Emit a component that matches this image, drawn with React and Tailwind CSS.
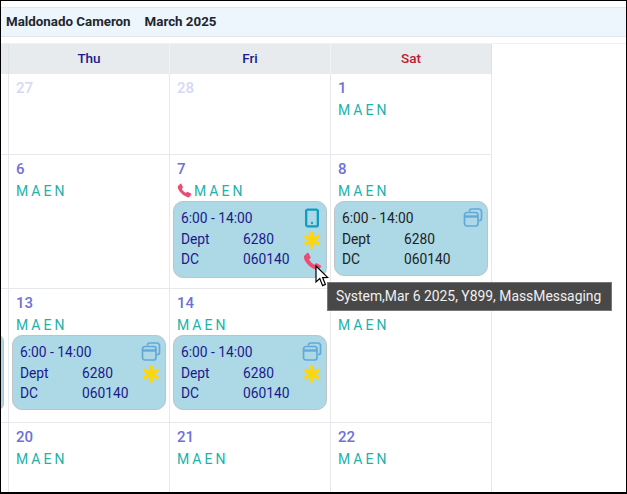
import { Smartphone } from "lucide-react";

const FONT = "font-['Roboto','Liberation_Sans',sans-serif]";

function CopyIcon() {
  return (
    <svg width="20" height="20" viewBox="0 0 20 20" fill="none" stroke="#62a9da" strokeWidth="1.7">
      <path d="M6.5 3.5 V3 a2 2 0 0 1 2-2 h7.5 a2.5 2.5 0 0 1 2.5 2.5 v7 a2 2 0 0 1-2 2 h-.5" />
      <rect x="1.5" y="4.5" width="13.5" height="13.5" rx="2.5" />
      <path d="M1.5 8.5 h13.5" strokeWidth="2.4" />
    </svg>
  );
}

function StarIcon() {
  return (
    <svg width="18" height="18" viewBox="0 0 18 18" stroke="#ffd60a" strokeWidth="3.6">
      <path d="M9 0.5 V17.5 M1.6 4.7 L16.4 13.3 M16.4 4.7 L1.6 13.3" />
    </svg>
  );
}

function PhoneIcon({ size = 17 }) {
  return (
    <svg width={size} height={size} viewBox="0 0 17 17" fill="#ea4c72">
      <path d="M1.2 3.4 L3.7 .8 Q4.5 .3 5 1 L6.7 4.4 Q7 5 6.5 5.5 L5.4 6.7 Q6.8 9.6 9.9 11.4 L11.3 10.2 Q11.8 9.8 12.4 10.1 L15.8 12 Q16.6 12.6 16 13.4 L14 15.8 Q13.2 16.6 12 16.2 Q6.5 14.3 3 9.6 Q.8 6.4 .8 4.6 Q.8 3.9 1.2 3.4 Z" />
    </svg>
  );
}

function Maen({ phone }) {
  return (
    <div className="flex h-[17px] items-center">
      {phone && <span className="mr-[2px] flex"><PhoneIcon size={15} /></span>}
      <span className="text-[14px] leading-none tracking-[3px] text-[#20b2aa]">MAEN</span>
    </div>
  );
}

function Shift({ dark, icons }) {
  const text = dark ? "text-[#222]" : "text-[#1a1a8c]";
  return (
    <div className={`mt-[2px] ml-[3px] flex w-[154px] rounded-[10px] border border-[#bcc4c8] bg-[#add8e6] py-[6px] pr-[4px] pl-[7px] text-[13.8px] ${text}`}>
      <div className="flex-1">
        <div className="h-[21px] leading-[21px]">6:00 - 14:00</div>
        <div className="flex h-[20px] leading-[20px]"><span className="w-[62px]">Dept</span>6280</div>
        <div className="flex h-[20px] leading-[20px]"><span className="w-[62px]">DC</span>060140</div>
      </div>
      <div className="flex w-[20px] flex-col items-center gap-[3px]">{icons}</div>
    </div>
  );
}

function Cell({ day, muted, maen = true, phone, last, children }) {
  return (
    <div className={`border-r border-[#e6e8ec] pt-[4px] pl-[7px] ${last ? "" : "border-b"}`}>
      <div className={`h-[20px] text-[15px] leading-[20px] font-medium ${muted ? "text-[#d5d8f5]" : "text-[#6d72d6]"}`}>{day}</div>
      {maen && <div className="mt-[3px]"><Maen phone={phone} /></div>}
      <div className="-ml-[7px]">{children}</div>
    </div>
  );
}

const copyStar = (
  <>
    <CopyIcon />
    <StarIcon />
  </>
);

export default function App() {
  return (
    <div className={`${FONT} relative h-[494px] w-[627px] overflow-hidden border-t border-r border-b-2 border-l border-t-black border-r-black border-b-black border-l-black bg-white`}>
      <div className="mt-[6px] flex h-[30px] items-center gap-[14px] border-y border-[#e4e8ec] bg-[#eef6fd] pl-[5px] text-[13.33px] font-bold text-[#22262e]">
        <span>Maldonado Cameron</span>
        <span>March 2025</span>
      </div>

      <div className="mt-[6px] border-t border-[#f0f1f3]">
        <div className="grid w-[491px] grid-cols-[8px_161px_161px_161px] grid-rows-[30px_81px_134px_134px_69px]">
          <div className="border-r border-[#dfe2e6] bg-[#e8ebee]" />
          <div className="border-r border-[#f2f3f5] bg-[#e8ebee] text-center text-[13.5px] leading-[29px] font-medium text-[#1a1a8c]">Thu</div>
          <div className="border-r border-[#f2f3f5] bg-[#e8ebee] text-center text-[13.5px] leading-[29px] font-medium text-[#1a1a8c]">Fri</div>
          <div className="border-r border-[#dfe2e6] bg-[#e8ebee] text-center text-[13.5px] leading-[29px] font-medium text-[#c0182e]">Sat</div>

          <div className="border-r border-b border-[#e6e8ec]" />
          <Cell day="27" muted maen={false} />
          <Cell day="28" muted maen={false} />
          <Cell day="1" />

          <div className="border-r border-b border-[#e6e8ec]" />
          <Cell day="6" />
          <Cell day="7" phone>
            <Shift
              icons={
                <>
                  <Smartphone size={20} strokeWidth={2.8} color="#0e9fc0" />
                  <StarIcon />
                  <PhoneIcon size={19} />
                </>
              }
            />
          </Cell>
          <Cell day="8">
            <Shift dark icons={<CopyIcon />} />
          </Cell>

          <div className="overflow-hidden border-r border-b border-[#e6e8ec]">
            <div className="mt-[46px] -ml-[8px] h-[75px] w-[11px] rounded-r-[6px] border border-[#bcc4c8] bg-[#add8e6]" />
          </div>
          <Cell day="13">
            <Shift icons={copyStar} />
          </Cell>
          <Cell day="14">
            <Shift icons={copyStar} />
          </Cell>
          {/* the day number of this cell sits under the tooltip */}
          <Cell day="" />

          <div className="border-r border-[#e6e8ec]" />
          <Cell day="20" last />
          <Cell day="21" last />
          <Cell day="22" last />
        </div>
      </div>

      {/* tooltip over the grid */}
      <div className="absolute top-[281px] left-[326px] h-[29px] w-[285px] border border-[#777] bg-[#484848] pl-[8px] text-[13.9px] leading-[27px] whitespace-nowrap text-[#f0f0f0]">
        System,Mar 6 2025, Y899, MassMessaging
      </div>

      {/* mouse cursor */}
      <svg className="absolute top-[264px] left-[314px]" width="15" height="23" viewBox="0 0 15 23" fill="#fff" stroke="#000" strokeWidth="1.2">
        <path d="M1 1 V17 L4.8 13.6 L7.6 20.6 L10.4 19.4 L7.6 12.6 L12.6 12.4 Z" />
      </svg>
    </div>
  );
}
